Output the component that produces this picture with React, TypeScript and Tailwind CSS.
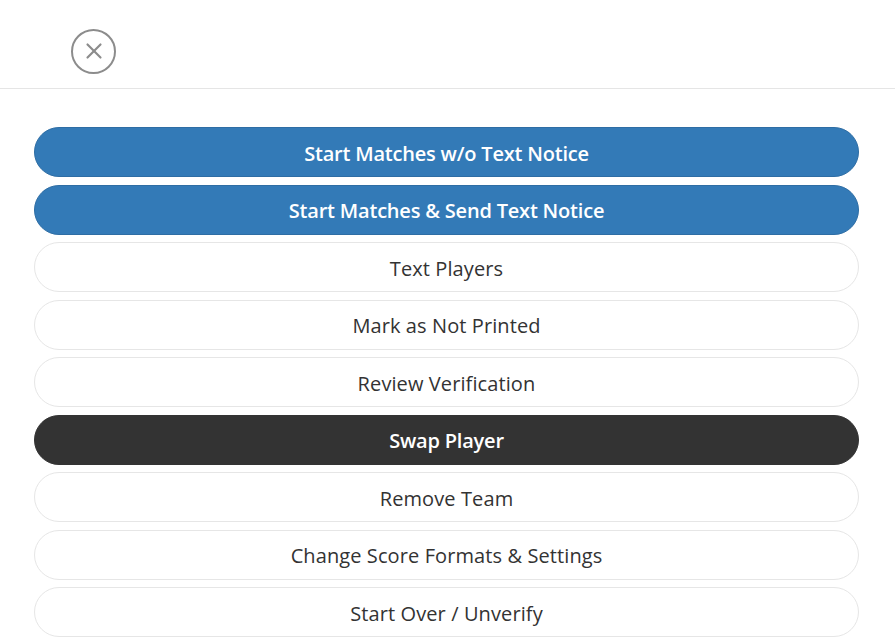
import { X } from 'lucide-react';

type Action = { label: string; variant: 'primary' | 'dark' | 'default' };

const actions: Action[] = [
  { label: 'Start Matches w/o Text Notice', variant: 'primary' },
  { label: 'Start Matches & Send Text Notice', variant: 'primary' },
  { label: 'Text Players', variant: 'default' },
  { label: 'Mark as Not Printed', variant: 'default' },
  { label: 'Review Verification', variant: 'default' },
  { label: 'Swap Player', variant: 'dark' },
  { label: 'Remove Team', variant: 'default' },
  { label: 'Change Score Formats & Settings', variant: 'default' },
  { label: 'Start Over / Unverify', variant: 'default' },
];

const variantClass = {
  primary: 'bg-[#337ab7] border-[#2e6da4] text-white font-semibold tracking-[-0.2px]',
  dark: 'bg-[#333333] border-[#333333] text-white font-semibold tracking-[-0.2px]',
  default: 'bg-white border-[#e6e6e6] text-[#333333] font-medium tracking-[0.1px]',
};

export default function App() {
  return (
    <div className="min-h-screen bg-white font-['Open_Sans',sans-serif]">
      {/* Header */}
      <div className="h-[89px] border-b border-[#e5e5e5] flex items-center pl-[71px]">
        <button className="w-[45px] h-[45px] rounded-full border-[2.5px] border-[#8c8c8c] flex items-center justify-center text-[#8c8c8c] mt-[14px]">
          <X size={26} strokeWidth={2} />
        </button>
      </div>

      {/* Actions */}
      <div className="flex flex-col gap-[7.5px] pl-[34px] pr-[36px] pt-[38px]">
        {actions.map((a) => (
          <button
            key={a.label}
            className={`h-[50px] rounded-full border text-[20px] pt-[3px] flex items-center justify-center ${variantClass[a.variant]}`}
          >
            {a.label}
          </button>
        ))}
      </div>
    </div>
  );
}
